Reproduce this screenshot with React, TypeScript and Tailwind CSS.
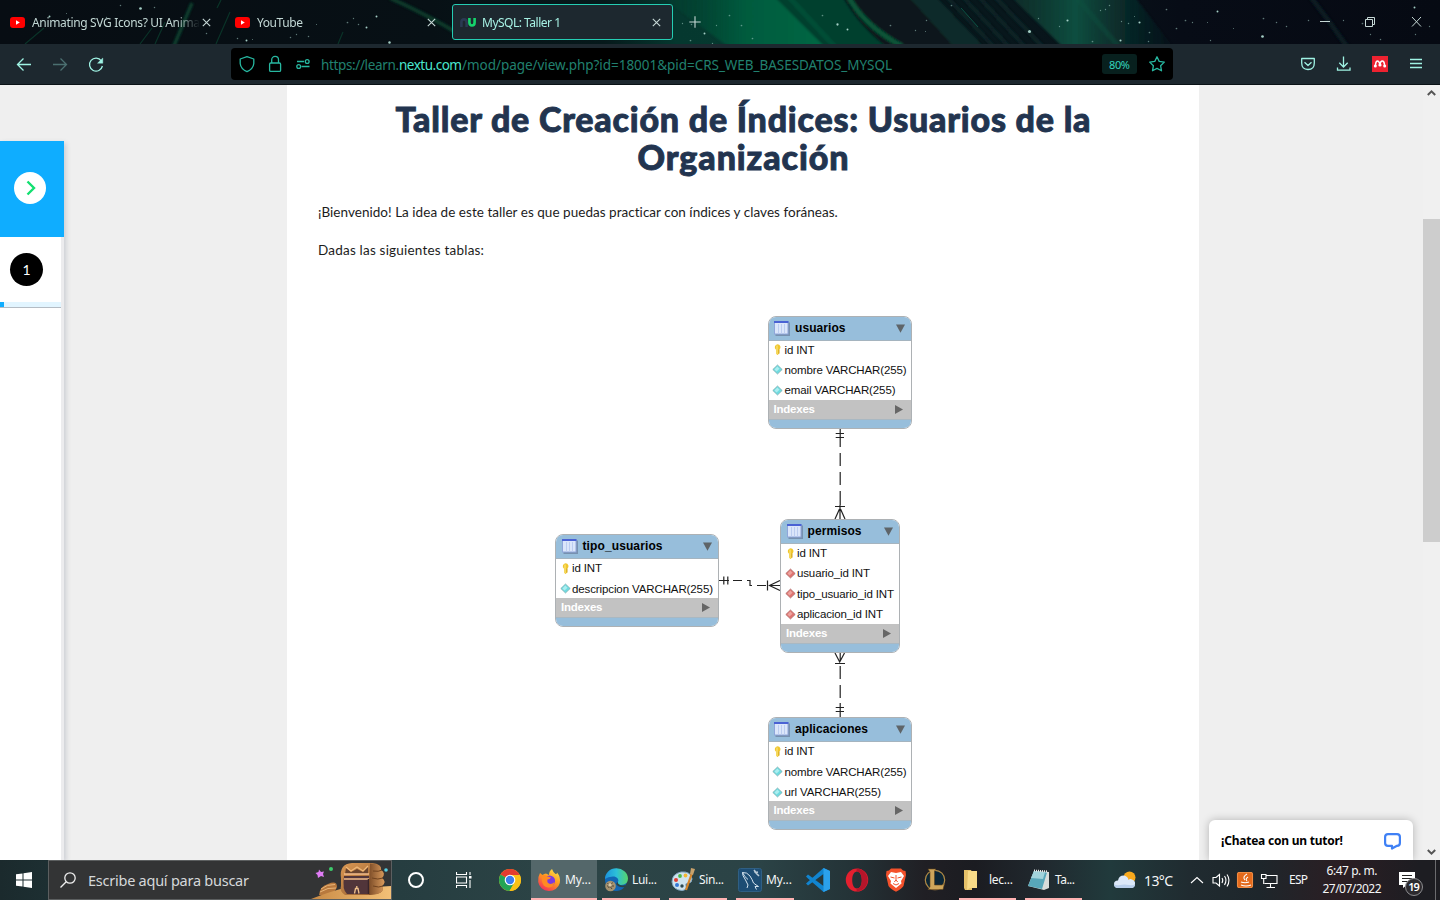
import { useLayoutEffect, useRef, useState } from "react";
import type { ReactNode } from "react";

const UI = "font-['Noto_Sans','Open_Sans',sans-serif]";
const HELV = "font-['Liberation_Sans',Arial,sans-serif]";
const BODY = "font-['Lato','Open_Sans',sans-serif]";

/** A single line of text whose tracking is adjusted so that it spans `w` pixels. */
function Fit({ w, className = "", children }: { w: number; className?: string; children: string }) {
  const ref = useRef<HTMLSpanElement>(null);
  const [ls, setLs] = useState(0);
  useLayoutEffect(() => {
    if (!ref.current) return;
    const natural = ref.current.getBoundingClientRect().width - ls * children.length;
    setLs((w - natural) / Math.max(1, children.length - 1));
  }, [w, children]);
  return (
    <span ref={ref} className={`inline-block shrink-0 whitespace-pre ${className}`} style={{ letterSpacing: `${ls}px`, marginRight: `${-ls}px` }}>
      {children}
    </span>
  );
}

/* ---------- browser chrome ---------- */

const stars: [number, number, number][] = [
  [120, 5, 0.8], [140, 8, 1.4], [154, 7, 0.8], [49, 16, 1], [106, 17, 0.7], [206, 33, 0.8], [66, 13, 0.6], [120, 20, 0.8], [157, 22, 0.7],
  [237, 38, 0.8], [246, 40, 1], [252, 39, 0.6], [277, 18, 0.7], [290, 37, 0.8], [296, 34, 0.7], [308, 36, 0.8], [316, 24, 0.6], [347, 22, 0.9],
  [353, 18, 0.7], [358, 24, 0.8], [366, 27, 1], [376, 16, 1], [389, 42, 1.3], [682, 23, 0.7], [691, 24, 0.8], [704, 33, 1], [716, 25, 0.7],
  [690, 40, 0.9], [712, 43, 0.7], [729, 15, 0.9], [741, 25, 0.9], [752, 38, 0.9], [822, 15, 0.9], [837, 24, 1.2], [847, 29, 1], [890, 25, 0.9],
  [915, 30, 0.7], [951, 5, 0.9], [926, 20, 0.8], [925, 31, 0.6], [1029, 31, 1.6], [1038, 18, 0.7], [1067, 20, 1.1], [1059, 26, 0.7],
  [1100, 10, 0.7], [1105, 9, 0.7], [1109, 5, 0.8], [1121, 21, 0.7], [1128, 23, 0.8], [1139, 22, 1.1], [1134, 16, 0.6], [1149, 32, 0.9],
  [1092, 41, 0.9], [1120, 40, 1.1], [1148, 41, 0.8], [1166, 9, 0.9], [1176, 28, 0.9], [1185, 20, 0.9], [1192, 22, 0.7], [1217, 11, 1],
  [1207, 22, 0.6], [1210, 40, 0.7], [1233, 28, 0.6], [1262, 36, 1.4], [1263, 18, 0.9], [1276, 22, 0.8], [1286, 26, 0.8], [1308, 20, 0.8],
  [1343, 20, 0.7], [1362, 23, 0.9], [1370, 34, 0.7], [1380, 39, 0.8], [1414, 7, 1], [1415, 34, 0.7], [1429, 26, 0.7],
];

function Aurora() {
  return (
    <svg className="absolute inset-0 h-full w-full" viewBox="0 0 1440 44" preserveAspectRatio="none">
      <defs>
        <linearGradient id="sky" x1="0" x2="1">
          <stop offset="0" stopColor="#070d13" />
          <stop offset=".3" stopColor="#071015" />
          <stop offset=".42" stopColor="#06191b" />
          <stop offset=".47" stopColor="#05382f" />
          <stop offset=".58" stopColor="#073a30" />
          <stop offset=".62" stopColor="#07181c" />
          <stop offset=".7" stopColor="#08171c" />
          <stop offset=".82" stopColor="#070c16" />
          <stop offset="1" stopColor="#060a13" />
        </linearGradient>
        <linearGradient id="ray1" x1="0" x2="1">
          <stop offset="0" stopColor="#05452f" stopOpacity=".1" />
          <stop offset=".5" stopColor="#045a3e" />
          <stop offset="1" stopColor="#046844" />
        </linearGradient>
        <linearGradient id="ray2" x1="0" x2="1">
          <stop offset="0" stopColor="#0c4035" stopOpacity=".5" />
          <stop offset=".4" stopColor="#0e4e40" />
          <stop offset="1" stopColor="#0a2d2c" stopOpacity=".1" />
        </linearGradient>
        <filter id="soft" x="-5%" width="110%" y="-20%" height="140%"><feGaussianBlur stdDeviation="1.300" /></filter>
      </defs>
      <rect width="1440" height="44" fill="url(#sky)" />
      <g filter="url(#soft)">
        <path d="M660 -4H774L826 48H730Z" fill="url(#ray1)" />
        <path d="M774 -4H842Q860 28 892 48H826Z" fill="#06402f" />
        <path d="M842 -4H925L965 48H888Q860 28 842 -4Z" fill="#07191c" />
        <path d="M848 -4Q864 26 902 46" fill="none" stroke="#075438" strokeWidth="5" />
        <path d="M788 -4L836 48" stroke="#065238" strokeWidth="5" opacity=".8" />
        <path d="M908 -4H935L985 48H955Z" fill="#0a2c2a" />
        <path d="M946 -4L995 48M962 -4L1010 48M978 -4L1026 48M994 -4L1044 48" stroke="#0a2425" strokeWidth="4" />
        <path d="M1010 -4H1134L1174 48H1064Z" fill="url(#ray2)" />
        <path d="M1075 -4L1120 48" stroke="#0d5340" strokeWidth="5" opacity=".4" />
        <path d="M1310 -4Q1330 22 1348 48" stroke="#081a20" strokeWidth="5" fill="none" />
        <path d="M390 -2Q430 16 462 36" stroke="#0a3b2c" strokeWidth="4" fill="none" />
        <path d="M192 3L173 48" stroke="#0b4a35" strokeWidth="3.500" opacity=".8" />
      </g>
      <path d="M961 8L978 27" stroke="#0f5344" strokeWidth="1" />
      <path d="M230 12L216 44M221 0L217 8M343 32L338 44M44 28L25 44M152 28L140 44M165 22L155 44" stroke="#0a3328" strokeWidth="1.200" />
      {stars.map(([x, y, r], i) => (
        <circle key={i} cx={x + 0.5} cy={y + 0.5} r={r * 0.95} fill="#a5cfc6" opacity={r > 0.9 ? 1 : 0.55} />
      ))}
    </svg>
  );
}

function YouTubeMark() {
  return (
    <svg className="h-[11px] w-[15px] shrink-0" viewBox="0 0 15 11">
      <rect width="15" height="11" rx="3" fill="#f00" />
      <path d="M6 3.2L9.8 5.5L6 7.8Z" fill="#fff" />
    </svg>
  );
}

function CloseMark({ className = "" }: { className?: string }) {
  return (
    <svg className={`h-[9px] w-[9px] shrink-0 ${className}`} viewBox="0 0 9 9">
      <path d="M.8.8L8.2 8.2M8.2.8L.8 8.2" stroke="#c6d8d6" strokeWidth="1.1" />
    </svg>
  );
}

function TabStrip() {
  return (
    <div className={`relative h-11 shrink-0 overflow-hidden bg-[#070d13] ${UI}`}>
      <Aurora />
      <div className="relative flex h-11 items-center text-[12px] leading-4 text-[#c3d8d5]">
        <div className="flex w-[225px] items-center pl-[10px]">
          <YouTubeMark />
          <div className="ml-[7px] mt-0.5 w-[168px] overflow-hidden [mask-image:linear-gradient(90deg,#000_85%,transparent)]">
            <Fit w={168}>Animating SVG Icons? UI Anima</Fit>
          </div>
          <CloseMark className="ml-[2px]" />
        </div>
        <div className="flex w-[227px] items-center pl-[10px]">
          <YouTubeMark />
          <div className="ml-[7px] mt-0.5 w-[170px]"><Fit w={46}>YouTube</Fit></div>
          <CloseMark />
        </div>
        <div className="flex h-9 w-[221px] items-center rounded-[3px] border border-[#25cdb3] bg-[#1d282f] pl-[7px] text-[#a6f1e4]">
          <svg className="h-[9px] w-4 shrink-0" viewBox="0 0 16 9" fill="none" strokeWidth="2.6">
            <path d="M1.4 9V4.5Q1.4 1.4 4 1.4T6.6 4.5V9" stroke="#2b3a52" />
            <path d="M9.4 0V4.5Q9.4 7.5 12 7.5T14.6 4.5V0" stroke="#16d46c" />
          </svg>
          <div className="ml-[6px] mt-0.5 w-[170px]"><Fit w={79}>MySQL: Taller 1</Fit></div>
          <CloseMark />
        </div>
        <svg className="ml-4 h-3 w-3" viewBox="0 0 12 12"><path d="M6 .3V11.7M.3 6H11.7" stroke="#c6d8d6" strokeWidth="1.1" /></svg>
        <div className="flex-1" />
        <svg className="mr-[18px] h-3 w-[103px]" viewBox="0 0 103 12" fill="none" stroke="#c6d8d6">
          <path d="M1 5.5H11" />
          <path d="M46.5 3.5H53.5V10.5H46.5ZM48.5 3.5V1.5H55.5V8.5H53.5" />
          <path d="M93 1L102 10.5M102 1L93 10.5" />
        </svg>
      </div>
    </div>
  );
}

function Toolbar() {
  return (
    <div className={`flex h-10 shrink-0 items-center bg-[#1d282f] ${UI}`}>
      <svg className="h-10 w-[231px] shrink-0" viewBox="0 0 231 40" fill="none" stroke="#9ff3e4" strokeWidth="1.3">
        <path d="M31 20.5H17.5M23.5 14.5L17.5 20.5L23.5 26.5" />
        <path d="M53 20.5H66.5M60.5 14.5L66.5 20.5L60.5 26.5" stroke="#4b6f70" />
        <path d="M101.3 16.8A6.500 6.500 0 1 0 102.400 22" />
        <path d="M97.500 19.200H102.800V14Z" fill="#9ff3e4" strokeWidth=".4" />
      </svg>
      <div className="flex h-8 w-[942px] shrink-0 items-center rounded-[4px] bg-black">
        <svg className="h-8 w-[89px] shrink-0" viewBox="0 0 89 32" fill="none" stroke="#27b8a1" strokeWidth="1.3">
          <path d="M16 8.7L22.8 11V15.5Q22.3 20.8 16 23.7Q9.700 20.8 9.200 15.500V11Z" strokeLinejoin="round" />
          <rect x="38.600" y="15" width="11" height="8.400" rx="1.200" />
          <path d="M40.700 15V11.800A3.400 3.400 0 0 1 47.500 11.800V15" />
          <path d="M66 13.500H73M70.500 18.500H78.500" />
          <circle cx="76.200" cy="13.500" r="1.900" />
          <circle cx="67.700" cy="18.500" r="1.900" />
        </svg>
        <div className="flex w-[782px] pl-px pt-px text-[13.500px] leading-5 text-[#21806f]">
          <Fit w={78}>https://learn.</Fit>
          <Fit w={63} className="text-[#49e6ce]">nextu.com</Fit>
          <Fit w={430}>/mod/page/view.php?id=18001&pid=CRS_WEB_BASESDATOS_MYSQL</Fit>
        </div>
        <div className="flex h-5 w-[35px] items-center justify-center rounded-[3px] bg-[#08201e] pt-0.5 text-[11px] leading-4 text-[#35d4bc]">
          <Fit w={21}>80%</Fit>
        </div>
        <svg className="ml-3 h-4 w-4" viewBox="0 0 16 16" fill="none" stroke="#27b8a1" strokeWidth="1.3">
          <path d="M8 .8L10.200 5.400L15.300 6.100L11.600 9.700L12.500 14.800L8 12.400L3.500 14.800L4.400 9.700L.7 6.100L5.800 5.400Z" strokeLinejoin="round" />
        </svg>
      </div>
      <div className="flex-1" />
      <svg className="mr-4 h-6 w-[124px]" viewBox="0 0 124 24" fill="none" stroke="#9ff3e4" strokeWidth="1.300">
        <path d="M1.700 6.500H14.300V11Q14.300 17.500 8 17.500T1.700 11ZM4.500 10.300L8 13.500L11.500 10.300" strokeLinejoin="round" />
        <path d="M43.500 4.500V14.500M39.300 10.800L43.500 15L47.700 10.800M37.500 15.500V18.200H50V15.500" />
        <rect x="72" y="4" width="16" height="16" fill="#ed2230" stroke="none" />
        <path d="M75.500 14V12.500Q76 9 77.500 9T80 12.500Q80.500 9 82.300 9T84.500 12.500V14" stroke="#fff" strokeWidth="1.500" />
        <g fill="#fff" stroke="none">
          <circle cx="75.300" cy="14" r="1.500" /><circle cx="80" cy="13" r="1.600" /><circle cx="84.700" cy="14" r="1.500" />
        </g>
        <path d="M110 7.500H122M110 11.500H122M110 15.500H122" />
      </svg>
    </div>
  );
}

/* ---------- table diagram ---------- */

type Kind = "key" | "col" | "fk";
type Row = { kind: Kind; text: string; w: number };

function RowIcon({ kind }: { kind: Kind }) {
  if (kind === "key")
    return (
      <svg className="h-[11px] w-[11px] shrink-0" viewBox="0 0 11 11">
        <path d="M5.500 .3A3 3 0 0 1 7.300 5.700V9.500L5.500 11L4 9.800V5.700A3 3 0 0 1 5.500 .3Z" fill="#f0c62c" />
        <path d="M5 1.500V10" stroke="#fbe98c" strokeWidth="1" />
        <path d="M7 5.500V9.500" stroke="#b58a20" strokeWidth=".6" />
      </svg>
    );
  const c = kind === "col" ? ["#6fdbe0", "#7fa9ac", "#c6f7f7"] : ["#df7471", "#a87070", "#f3b9b4"];
  return (
    <svg className="h-[11px] w-[11px] shrink-0" viewBox="0 0 11 11">
      <path d="M5.500 1L10.200 5.500L5.500 10L.8 5.500Z" fill={c[0]} stroke={c[1]} strokeWidth=".7" />
      <path d="M5.300 2.600L7.500 4.700L4.500 7.500L2.500 5.500Z" fill={c[2]} opacity=".7" />
    </svg>
  );
}

function Entity({ place, title, titleW, rows }: { place: string; title: string; titleW: number; rows: Row[] }) {
  return (
    <div className={`absolute flex flex-col overflow-hidden rounded-[8px] border border-[#adb1b4] bg-white ${HELV} ${place}`}>
      <div className="flex h-6 shrink-0 items-center border-b border-[#a5b4bf] bg-[#97bedb] pl-[5.500px] pr-[6.500px]">
        <svg className="h-[15px] w-4 shrink-0" viewBox="0 0 16 15">
          <rect x="1.500" y="1.500" width="14.500" height="13.500" fill="#6f86a4" opacity=".8" />
          <rect x=".5" y=".5" width="13.500" height="12.500" fill="#dbe6fa" stroke="#8fa6da" />
          <rect x="0" y="0" width="14.500" height="2" fill="#4a62d4" />
          <path d="M4.500 3V12.500M7.500 3V12.500M10.500 3V12.500" stroke="#bccdf0" />
        </svg>
        <Fit w={titleW} className="-mt-px ml-[5px] text-[12px] font-bold leading-4 text-black">{title}</Fit>
        <div className="flex-1" />
        <svg className="h-[9px] w-[9px]" viewBox="0 0 9 9"><path d="M0 .5H9L4.500 8.800Z" fill="#5e6468" /></svg>
      </div>
      <div className="min-h-0 flex-1 overflow-hidden">
        {rows.map((r, i) => (
          <div key={i} className="flex h-[20.400px] items-center pl-[3.500px] first:-mt-[1.200px]">
            <RowIcon kind={r.kind} />
            <Fit w={r.w} className="ml-[1.500px] text-[11.500px] leading-4 text-[#111]">{r.text}</Fit>
          </div>
        ))}
      </div>
      <div className="flex h-[19px] shrink-0 items-center bg-[#c2c2c2] pl-[5px] pr-2">
        <Fit w={41.500} className="text-[11.500px] font-bold leading-4 text-white">Indexes</Fit>
        <div className="flex-1" />
        <svg className="h-[9px] w-2" viewBox="0 0 8 9"><path d="M0 0V9L8 4.500Z" fill="#666" /></svg>
      </div>
      <div className="h-[9px] shrink-0 border-t border-[#a9b8c2] bg-[#97bedb]" />
    </div>
  );
}

function Diagram() {
  return (
    <div className="relative h-[560px] w-full">
      <svg className="absolute inset-0 h-full w-full" viewBox="287 300 912 560" fill="none" stroke="#222" strokeWidth="1.200">
        <path d="M840.200 428V447M840.200 453V466M840.200 472V485M840.200 491V505M835.700 433.500H844M835.700 437.500H844M835 506.500H845M840 505V519M839.500 509L835 519M840.500 509L845 519" />
        <path d="M840.200 652V661M840.200 666V679M840.200 685V698M840.200 703V717M835 663.500H845M835 653L839.700 662L844.500 653M835.700 707.500H844M835.700 711.500H844" />
        <path d="M719 580.500H729M723.800 576.500V584.500M727.800 576.500V584.500M733 580.500H742M747 580.500H750V585.500H752M757 585.500H766M767.500 580.500V590.500M780 580.500L769.500 585.500L780 590.500M769.500 585.500H780" />
      </svg>
      <Entity place="left-[480.500px] top-[15.600px] w-[144.500px] h-[113px]" title="usuarios" titleW={50.500}
        rows={[{ kind: "key", text: "id INT", w: 30 }, { kind: "col", text: "nombre VARCHAR(255)", w: 122 }, { kind: "col", text: "email VARCHAR(255)", w: 111 }]} />
      <Entity place="left-[268px] top-[234.400px] w-[164px] h-[92.600px]" title="tipo_usuarios" titleW={80}
        rows={[{ kind: "key", text: "id INT", w: 30 }, { kind: "col", text: "descripcion VARCHAR(255)", w: 141 }]} />
      <Entity place="left-[493px] top-[219px] w-[120px] h-[133.500px]" title="permisos" titleW={54}
        rows={[{ kind: "key", text: "id INT", w: 30 }, { kind: "fk", text: "usuario_id INT", w: 73 }, { kind: "fk", text: "tipo_usuario_id INT", w: 97 }, { kind: "fk", text: "aplicacion_id INT", w: 86 }]} />
      <Entity place="left-[480.500px] top-[417.400px] w-[144.500px] h-[112.600px]" title="aplicaciones" titleW={73}
        rows={[{ kind: "key", text: "id INT", w: 30 }, { kind: "col", text: "nombre VARCHAR(255)", w: 122 }, { kind: "col", text: "url VARCHAR(255)", w: 96.500 }]} />
    </div>
  );
}

/* ---------- page ---------- */

function SideRail() {
  return (
    <div className="mt-14 flex w-16 shrink-0 flex-col shadow-[2px_2px_5px_rgba(60,70,100,0.2)]">
      <div className="flex h-24 shrink-0 items-center bg-[#0fadff] pl-[14px]">
        <div className="mb-0.5 flex h-8 w-8 items-center justify-center rounded-full bg-white">
          <svg className="ml-0.5 h-4 w-2.5" viewBox="0 0 10 16" fill="none"><path d="M1.500 1.500L8 8L1.500 14.500" stroke="#12e070" strokeWidth="2.400" /></svg>
        </div>
      </div>
      <div className="flex-1 bg-[#ececee] pr-[3px]">
        <div className="h-full bg-white">
          <div className="flex h-[71px] flex-col border-b border-[#b4bcc4]">
            <div className={`ml-[10px] mt-4 flex h-[33px] w-[33px] items-center justify-center rounded-full bg-black text-[14px] leading-4 text-white ${BODY}`}>1</div>
            <div className="mt-4 h-[5px] bg-[#e2f5ff]"><div className="h-[5px] w-1 bg-[#0fadff]" /></div>
          </div>
        </div>
      </div>
    </div>
  );
}

function Page() {
  return (
    <div className="flex h-[776px] shrink-0 overflow-hidden border-t border-[#0a1216] bg-[#efefef]">
      <SideRail />
      <main className="ml-[223px] flex w-[912px] shrink-0 flex-col bg-white">
        <h1 className={`flex h-[96px] shrink-0 flex-col items-center pt-[15px] text-[34px] font-black leading-[38px] text-[#22344f] [-webkit-text-stroke:0.9px_#22344f] ${BODY}`}>
          <Fit w={695}>Taller de Creación de Índices: Usuarios de la</Fit>
          <Fit w={211}>Organización</Fit>
        </h1>
        <div className={`flex h-[119px] shrink-0 flex-col pl-[31px] pt-[22px] text-[13.500px] leading-[19px] text-[#1c1c1c] ${BODY}`}>
          <p><Fit w={520}>¡Bienvenido! La idea de este taller es que puedas practicar con índices y claves foráneas.</Fit></p>
          <p className="mt-[19px]"><Fit w={166}>Dadas las siguientes tablas:</Fit></p>
        </div>
        <Diagram />
      </main>
      <aside className="flex flex-1 items-end justify-center overflow-hidden">
        <div className={`flex h-10 w-[204px] items-center rounded-t-[6px] bg-white pl-[12px] pr-3 pt-0.5 text-[12px] font-bold leading-4 text-black shadow-[0_0_8px_rgba(0,0,0,0.25)] ${UI}`}>
          <Fit w={122}>¡Chatea con un tutor!</Fit>
          <div className="flex-1" />
          <svg className="h-[17px] w-[17px]" viewBox="0 0 17 17" fill="none">
            <path d="M4 1.200H13Q15.900 1.200 15.900 4V10Q15.900 12.800 13 12.800L8 15.500V12.800H4Q1.100 12.800 1.100 10V4Q1.100 1.200 4 1.200Z" stroke="#3f80f5" strokeWidth="2.200" strokeLinejoin="round" />
          </svg>
        </div>
      </aside>
      <div className="flex w-[17px] shrink-0 flex-col items-center bg-[#f0f0f0]">
        <svg className="mt-[4px] h-2 w-[9px]" viewBox="0 0 9 8" fill="none"><path d="M.8 6L4.500 2.300L8.200 6" stroke="#555" strokeWidth="2" /></svg>
        <div className="mt-[122px] h-[323px] w-full bg-[#cdcdcd]" />
        <div className="flex-1" />
        <svg className="mb-[4px] h-2 w-[9px]" viewBox="0 0 9 8" fill="none"><path d="M.8 2L4.500 5.700L8.200 2" stroke="#555" strokeWidth="2" /></svg>
      </div>
    </div>
  );
}

/* ---------- taskbar ---------- */

function Task({ icon, label, w, active = false, className = "" }: { icon: ReactNode; label: string; w: number; active?: boolean; className?: string }) {
  return (
    <div className={`flex h-10 shrink-0 items-center border-b-2 border-[#ffb3b3] pt-0.5 text-[12px] leading-4 ${active ? "bg-[#54676a]" : ""} ${className}`}>
      {icon}
      <Fit w={w} className="ml-1">{label}</Fit>
    </div>
  );
}

const Chrome = () => (
  <svg className="h-6 w-6" viewBox="0 0 24 24">
    <circle cx="12" cy="12" r="11" fill="#fbc116" />
    <path d="M12 12L2.500 6.500A11 11 0 0 1 21.500 6.500Z" fill="#e33b2e" />
    <path d="M12 12L2.500 6.500A11 11 0 0 0 11.500 23L17 14.500Z" fill="#23a455" />
    <path d="M12 7H21.800A11 11 0 0 1 11.500 23L16.500 14Z" fill="#fbc116" />
    <circle cx="12" cy="12" r="5.300" fill="#fff" /><circle cx="12" cy="12" r="4.200" fill="#3b7ded" />
  </svg>
);
const Firefox = () => (
  <svg className="ml-[6px] h-6 w-6 shrink-0" viewBox="0 0 24 24">
    <defs><linearGradient id="fx" x1=".8" y1="0" x2=".2" y2="1"><stop stopColor="#ffe14a" /><stop offset=".45" stopColor="#ff9a1f" /><stop offset="1" stopColor="#f3265f" /></linearGradient></defs>
    <path d="M3 5L5.500 7Q7 5.500 9 5.500L12 7Q12 3 15 1Q16 4 18.500 6Q20 6.500 20 4.500Q24 9 22.800 15A11 10.500 0 0 1 1.200 14Q.6 9 3 5Z" fill="url(#fx)" />
    <circle cx="12.500" cy="13" r="5.600" fill="#7a3be0" />
    <path d="M4.500 8Q8 6.500 10.500 8.500L14 9.500Q13 11.500 10.500 11.500Q9.500 15 13 16Q16 16 17.500 14Q16.500 20 11 19.500Q5.500 18.500 5 13Z" fill="#ff8a22" />
  </svg>
);
const Edge = () => (
  <svg className="ml-[2px] h-6 w-6 shrink-0" viewBox="0 0 24 24">
    <defs><linearGradient id="eg" x1="0" x2="1"><stop stopColor="#1c93dd" /><stop offset=".5" stopColor="#2cc0d8" /><stop offset="1" stopColor="#57d56a" /></linearGradient></defs>
    <circle cx="12" cy="12" r="11" fill="#1266b4" />
    <path d="M1 11A11.500 10.500 0 0 1 24 10.500Q24 17 17 17Q13 17 14 14Q15.500 10 10.500 8.500Q4.500 8 1 11Z" fill="url(#eg)" />
    <path d="M13.500 14Q14.500 18.500 22 17L21 19Q15 20 12 16Z" fill="#2b4346" />
    <circle cx="6.500" cy="18" r="5.300" fill="#a69270" /><path d="M3.500 15L8 21M8.500 14.500L4.500 20M3 18H10" stroke="#4f4637" strokeWidth="1" />
    <circle cx="6" cy="17" r="1.800" fill="#d8c9a8" />
  </svg>
);
const Paint = () => (
  <svg className="ml-[2px] h-6 w-6 shrink-0" viewBox="0 0 24 24">
    <path d="M1 14Q1 6 10 4Q20 3 21 11Q21 15 17 15Q14 15 15 18Q16 22 11 22.500Q2 22 1 14Z" fill="#cfe3ee" stroke="#84a9c4" />
    <circle cx="5" cy="12" r="2" fill="#e03c31" /><circle cx="9" cy="8" r="1.900" fill="#4db848" /><circle cx="14.500" cy="7.500" r="1.900" fill="#f4b731" /><circle cx="6" cy="17" r="2" fill="#3578d6" /><circle cx="11" cy="18" r="1.700" fill="#2e4850" />
    <path d="M21 5L15 22" stroke="#d88427" strokeWidth="2.200" /><path d="M19 6L20 0L24 1L22 7Z" fill="#c8a16b" />
  </svg>
);
const Workbench = () => (
  <svg className="ml-[2px] h-6 w-6 shrink-0" viewBox="0 0 24 24">
    <rect x=".5" y=".5" width="23" height="23" rx="2" fill="#1d4d74" stroke="#2f5f84" />
    <path d="M9 20L10 17L7.500 12Q4 7 4.500 4.500Q9 4 12 8Q14.500 12 15.500 15Q18 17 20.500 18.500L17 18.500L18.500 21.500M4.500 4.500Q6.500 9 10 11.500" fill="none" stroke="#d3e2ed" strokeWidth="1" />
    <path d="M16.500 3.500L21 8M16 2L18 4.500L20 4" stroke="#b9cad6" strokeWidth="1.600" fill="none" />
  </svg>
);
const Code = () => (
  <svg className="h-6 w-6" viewBox="0 0 24 24">
    <path d="M17.500 0L24 3V21L17.500 24L2 10.500L0 8.500L2 6.500L17.500 18V6L2 17.500L0 15.500Z" fill="#1184cf" />
    <path d="M17.500 0L24 3V21L17.500 24Z" fill="#2ba1ec" />
  </svg>
);
const Opera = () => (
  <svg className="h-6 w-6" viewBox="0 0 24 24">
    <path fillRule="evenodd" d="M12 .5A11.200 11.500 0 1 0 12 23.500A11.200 11.500 0 1 0 12 .5ZM12 3.500C14.800 3.500 16.800 7 16.800 12S14.800 20.500 12 20.500S7.200 17 7.200 12S9.200 3.500 12 3.500Z" fill="#e3202f" />
    <path d="M13 .600A11.200 11.500 0 0 1 13 23.400Q10.500 22.500 12 20.500C14.800 20.500 16.800 17 16.800 12S14.800 3.500 12 3.500Q10.500 1.500 13 .600Z" fill="#b5152a" />
  </svg>
);
const Brave = () => (
  <svg className="h-6 w-6" viewBox="0 0 24 24">
    <path d="M7 .5H17L19 2.500L21.500 3L22 7L19.500 18Q18 20.500 12 23.700Q6 20.500 4.500 18L2 7L2.500 3L5 2.500Z" fill="#f4512b" />
    <path d="M7 4L12 5L17 4L20 8L17 13L17.500 15.500L12 20L6.500 15.500L7 13L4 8Z" fill="#fff" />
    <path d="M6.500 9L10.500 10M17.500 9L13.500 10M12 7V12L10.300 14M12 12L13.700 14M9 15.500L12 17L15 15.500" stroke="#f4512b" strokeWidth="1" fill="none" />
  </svg>
);
const League = () => (
  <svg className="h-6 w-6" viewBox="0 0 24 24">
    <circle cx="12" cy="12" r="9.700" fill="#0b2636" stroke="#b08a45" strokeWidth="1.200" />
    <path d="M5 1H13L11.500 3V17H19L21.500 15.500L20 21.500H5L7 19V4Z" fill="#cda65b" stroke="#5b421c" strokeWidth=".6" />
  </svg>
);

function Treasure() {
  return (
    <svg className="h-[38px] w-[80px] shrink-0" viewBox="312 861 80 38">
      <defs>
        <linearGradient id="lid" x1="0" x2="1" y2="1"><stop stopColor="#dc9a55" /><stop offset="1" stopColor="#8b5428" /></linearGradient>
        <linearGradient id="fold" x1="0" x2="1"><stop stopColor="#7d4d28" /><stop offset="1" stopColor="#d99a5c" /></linearGradient>
        <linearGradient id="sand" x1="0" x2="1"><stop stopColor="#c98a45" /><stop offset="1" stopColor="#f3c077" /></linearGradient>
      </defs>
      <path d="M320 895Q321 886 329 884Q338 880 338 887Q337 891 330 896Z" fill="#b8793d" />
      <path d="M322 889Q328 884 336 884.500M321 892Q329 887 337 888" stroke="#e8b478" fill="none" />
      <path d="M312 899Q330 892 345 888Q368 888 392 886V899Z" fill="url(#sand)" />
      <path d="M342 878Q340 864 353 863H373Q383 864 382 870Q387 873 383 878Q388 882 383 886Q386 892 378 894L370 895H346Q340 891 342 886Z" fill="url(#lid)" />
      <path d="M371 863.500Q383 864 382 870Q387 873 383 878Q388 882 383 886Q386 892 378 894L370 895Z" fill="url(#fold)" />
      <path d="M374 871Q380 872 383 870M373 878Q379 880 384 878M374 886Q380 888 384 886" stroke="#70431f" fill="none" />
      <path d="M345 876H370V894H348Q343 890 345 876Z" fill="#51353a" />
      <path d="M347 868L352 872L358 869L364 872L369 867V874H346Z" fill="#6b452f" />
      <path d="M347 867L352 871L358 867L364 871L369 866" stroke="#f0b878" strokeWidth="1.200" fill="none" />
      <path d="M345 874H370M345 879H370" stroke="#f3bd8c" strokeWidth="1.300" />
      <path d="M369.500 879V894" stroke="#38252b" strokeWidth="1.500" />
      <path d="M355.500 893.500L356.500 888.500H359L360 893.500M357.800 886V889" stroke="#f0c08c" strokeWidth="1.300" fill="none" />
      <path d="M320 869.500L322 872L325 871.500L324 874L325 877L322 876L319 878L318.500 875L316.500 873L319.500 872Z" fill="#e07cf5" />
      <circle cx="332" cy="869" r="2" fill="#3dcc6c" /><circle cx="387" cy="870" r="1.800" fill="#57cde0" />
    </svg>
  );
}

function Taskbar() {
  return (
    <div className={`flex h-10 shrink-0 items-center overflow-hidden bg-[linear-gradient(90deg,#1b2a2d_0px,#1d2f32_48px,#263d40_400px,#2c4446_560px,#2b4346_760px,#243337_850px,#201f24_925px,#1b1c21_975px,#20282e_1040px,#213a3c_1110px,#202b30_1190px,#1e262b_1260px,#2b1e23_1340px,#1d1d22_1420px)] text-[#f4f6f6] ${UI}`}>
      <div className="flex w-12 shrink-0 justify-center">
        <svg className="h-4 w-4" viewBox="0 0 16 16" fill="#fff"><path d="M0 2.300L6.500 1.400V7.500H0ZM7.500 1.200L16 0V7.500H7.500ZM0 8.500H6.500V14.600L0 13.700ZM7.500 8.500H16V16L7.500 14.800Z" /></svg>
      </div>
      <div className="flex h-10 w-[344px] shrink-0 items-center border border-[#5c5f60] bg-[#333435]">
        <svg className="ml-[11px] h-4 w-4 shrink-0" viewBox="0 0 16 16" fill="none" stroke="#eee" strokeWidth="1.300"><circle cx="10" cy="6" r="5.200" /><path d="M6.200 9.800L.5 15.500" /></svg>
        <Fit w={161} className="ml-3 text-[14.500px] leading-5 text-[#d5d8da]">Escribe aquí para buscar</Fit>
        <div className="flex-1" />
        <Treasure />
      </div>
      <div className="flex w-12 shrink-0 justify-center"><div className="h-4 w-4 rounded-full border-2 border-white" /></div>
      <div className="flex w-[47px] shrink-0 justify-center">
        <svg className="h-4 w-4" viewBox="0 0 16 16" fill="none" stroke="#fff"><path d="M.5 0V2.500H10.500V0M.5 16V13.500H10.500V16M.5 5H10.500V11H.5ZM14 0V3M14 8V16" strokeWidth="1.100" /><rect x="13" y="4" width="2.500" height="2.500" fill="#fff" stroke="none" /></svg>
      </div>
      <div className="flex w-11 shrink-0 justify-center pl-0.5"><Chrome /></div>
      <Task className="w-[66px]" active icon={<Firefox />} label="My..." w={26} />
      <Task className="ml-[5px] w-[58px]" icon={<Edge />} label="Lui..." w={25} />
      <Task className="ml-[9px] w-[58px]" icon={<Paint />} label="Sin..." w={25} />
      <Task className="ml-[9px] w-[58px]" icon={<Workbench />} label="My..." w={26} />
      <div className="ml-1 flex w-10 shrink-0 justify-center"><Code /></div>
      <div className="flex w-[38px] shrink-0 justify-center"><Opera /></div>
      <div className="flex w-10 shrink-0 justify-center"><Brave /></div>
      <div className="flex w-[38px] shrink-0 justify-center"><League /></div>
      <Task className="ml-[5px] w-[57px]" w={24} label="lec..." icon={
        <svg className="ml-[2px] h-5 w-6 shrink-0" viewBox="0 0 24 20"><path d="M3 0H10L11 2V20H4L3 18Z" fill="#e5c068" /><path d="M7 1H16V18H9L6 20Z" fill="#f8da87" /></svg>} />
      <Task className="ml-[9px] w-[57px]" w={20} label="Ta..." icon={
        <svg className="ml-[2px] h-6 w-6 shrink-0" viewBox="0 0 24 24"><path d="M7 3L22 4L22 20L17 22L1 18Z" fill="#d9dcda" /><path d="M7 3L20 4.500L15 21L1 18Z" fill="#58a6b9" /><path d="M7 3L18 4.300L16 11L4 10Z" fill="#a2d3dc" /><path d="M7 2.500L21 3.500" stroke="#ececec" strokeDasharray="1 1" strokeWidth="2" /></svg>} />
      <svg className="ml-8 h-[18px] w-[22px] shrink-0" viewBox="0 0 22 18"><circle cx="15.500" cy="6.500" r="6" fill="#f8a91d" /><path d="M4 17Q0 17 0 13Q0 9.500 4 9.500Q5 4.500 9.500 4.500Q14 5 14.500 9Q16 7.500 18 8.500Q21.500 9.500 21 13Q21 17 17 17Z" fill="#dce8f8" /><path d="M0 13Q2 15 6 14T15 14T21 13Q21 17 17 17H4Q0 17 0 13Z" fill="#b9cfec" /></svg>
      <Fit w={29} className="ml-[8px] pt-0.5 text-[14px] leading-5">13°C</Fit>
      <svg className="ml-[17px] h-4 w-[90px] shrink-0" viewBox="1190 872 90 16" fill="none" stroke="#fff" strokeWidth="1.100">
        <path d="M1191 883L1197 877.500L1203 883" />
        <path d="M1213 877.500H1216L1219.500 874.500V886L1216 883H1213ZM1222 878Q1223.500 880 1222 883M1224.500 876Q1227.500 880 1224.500 885M1227 874.500Q1231 880 1227 886.500" />
        <rect x="1237.500" y="872.500" width="15" height="15" rx="1.500" fill="#e36a1c" stroke="#ef8b42" />
        <path d="M1247 874Q1242 877 1245 880M1248 877Q1245 879 1247 881M1241 882Q1245 883.500 1249 882M1241 885Q1246 887 1251 885" stroke="#fff" />
        <path d="M1266.500 875.500H1277V883.500H1264.500M1270.500 883.500V887.500M1266.500 887.500H1275M1261.500 874.500H1266V878.500H1261.500ZM1263.700 878.500V884" />
      </svg>
      <Fit w={19} className="ml-[9px] text-[12px] leading-4">ESP</Fit>
      <div className="ml-[7px] flex w-[74px] shrink-0 flex-col items-center text-[12px] leading-[18px]">
        <Fit w={51}>6:47 p. m.</Fit>
        <Fit w={59}>27/07/2022</Fit>
      </div>
      <div className="relative ml-[10px] h-6 w-[26px] shrink-0">
        <svg className="absolute left-0 top-0 h-5 w-4" viewBox="0 0 16 20"><path d="M0 4H16V17H8L4 20V17H0Z" fill="#fff" /><path d="M3 7.500H13M3 10.500H13M3 13.500H9" stroke="#222" /></svg>
        <div className="absolute left-[6px] top-[10px] flex h-[18px] w-[18px] items-center justify-center rounded-full border border-[#8d8d90] bg-[#2c2a2e] text-[11px] font-semibold leading-3 text-white">
          <Fit w={11.500}>19</Fit>
        </div>
      </div>
      <div className="flex-1" />
      <div className="mr-1 h-10 w-px bg-[#6b6b6e]" />
    </div>
  );
}

export default function App() {
  return (
    <div className="flex h-[900px] w-[1440px] flex-col overflow-hidden bg-white">
      <TabStrip />
      <Toolbar />
      <Page />
      <Taskbar />
    </div>
  );
}
